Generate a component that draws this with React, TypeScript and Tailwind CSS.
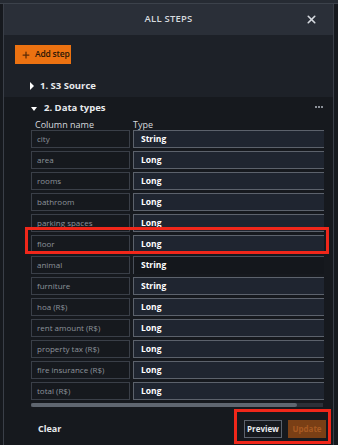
import { X, Plus } from 'lucide-react'

const rows: [string, string][] = [
  ['city', 'String'],
  ['area', 'Long'],
  ['rooms', 'Long'],
  ['bathroom', 'Long'],
  ['parking spaces', 'Long'],
  ['floor', 'Long'],
  ['animal', 'String'],
  ['furniture', 'String'],
  ['hoa (R$)', 'Long'],
  ['rent amount (R$)', 'Long'],
  ['property tax (R$)', 'Long'],
  ['fire insurance (R$)', 'Long'],
  ['total (R$)', 'Long'],
]

export default function App() {
  return (
    <div
      className="relative w-[338px] h-[445px] overflow-hidden bg-[#16191e]"
      style={{ fontFamily: '"Open Sans", "Noto Sans", Arial, sans-serif' }}
    >
      <div className="h-[4px] bg-[#262b33] border-b border-[#3c424b]" />
      <div className="flex flex-col h-[441px] mx-[3px] w-[331px] border-l border-r border-[#3a3f48]">
        {/* Header */}
        <div className="h-[31px] shrink-0 bg-[#2a2f38] flex items-center justify-center relative">
          <span className="text-[9.5px] font-semibold tracking-[0.2px] text-[#d6dadf]">ALL STEPS</span>
          <X className="absolute right-[15px] top-[9px] w-[13px] h-[13px] text-[#d6dadf]" strokeWidth={3} />
        </div>

        {/* Steps */}
        <div className="bg-[#1d2128] shrink-0 pt-[10px] h-[62px]">
          <button className="ml-[11px] h-[19px] w-[56px] bg-[#ec7211] flex items-center gap-[4px] pl-[6px] whitespace-nowrap text-[8.5px] font-semibold tracking-[-0.2px] text-[#2a1606]">
            <Plus className="w-[10px] h-[10px] shrink-0 text-[#5b2a06]" strokeWidth={3} />
            Add step
          </button>
          <div className="flex items-center mt-[15px] ml-[26px] gap-[6px]">
            <span className="w-0 h-0 border-y-[4px] border-y-transparent border-l-[4px] border-l-white" />
            <span className="text-[9.5px] font-bold text-[#e8eaed]">1. S3 Source</span>
          </div>
        </div>

        <div className="flex-1 flex flex-col bg-[#16191e] relative">
          <div className="flex items-center h-[20px] mt-[1px] pl-[27px] pr-[10px]">
            <span className="w-0 h-0 border-x-[3.5px] border-x-transparent border-t-[4px] border-t-white mt-[2px]" />
            <span className="ml-[7px] text-[9.5px] font-bold text-[#e8eaed]">2. Data types</span>
            <div className="ml-auto flex gap-[1px] -mt-[2px]">
              <span className="w-[2px] h-[2px] bg-[#8b9098]" />
              <span className="w-[2px] h-[2px] bg-[#8b9098]" />
              <span className="w-[2px] h-[2px] bg-[#8b9098]" />
            </div>
          </div>

          <div className="ml-[27px] w-[293px] overflow-hidden">
            <div className="flex text-[9px] text-[#d6dadf] h-[12px] items-start">
              <span className="w-[101px] pl-[4px]">Column name</span>
              <span className="pl-[1px]">Type</span>
            </div>
            <div className="flex flex-col gap-[3px]">
              {rows.map(([name, type]) => (
                <div key={name} className="flex gap-[3px] h-[18px]">
                  <div className="w-[99px] shrink-0 border border-[#3a3f48] flex items-center pl-[5px] whitespace-nowrap text-[8px] text-[#8d939b]">
                    {name}
                  </div>
                  <div
                    className={
                      name === 'animal'
                        ? 'w-[200px] shrink-0 border-l border-t border-[#4a505a] bg-[#14171c] flex items-center pl-[7px] text-[8.5px] font-bold text-white'
                        : 'w-[200px] shrink-0 border border-[#5c626c] bg-[#1f2530] flex items-center pl-[7px] text-[8.5px] font-bold text-white'
                    }
                  >
                    {type}
                  </div>
                </div>
              ))}
            </div>
            <div className="mt-[3px] h-[4px] w-[292px] bg-[#2c3038]">
              <div className="h-full w-[266px] bg-[#5f6670] rounded-[2px]" />
            </div>
          </div>

          <div className="flex items-center mt-[13px] pl-[34px] pr-[7px]">
            <span className="text-[9px] font-bold text-[#e8eaed]">Clear</span>
            <div className="ml-auto flex gap-[6px]">
              <button className="h-[18px] w-[38px] border border-[#5c626c] text-[8px] font-bold text-[#e8eaed]">Preview</button>
              <button className="h-[18px] w-[38px] bg-[#7a3f15] text-[8px] font-bold text-[#a85a22]">Update</button>
            </div>
          </div>
        </div>
      </div>

      {/* annotation highlights */}
      <div className="absolute left-[25px] top-[227px] w-[304px] h-[27px] border-[3px] border-[#f0271a]" />
      <div className="absolute left-[234px] top-[409px] w-[97px] h-[35px] border-[3px] border-[#f0271a]" />
    </div>
  )
}
